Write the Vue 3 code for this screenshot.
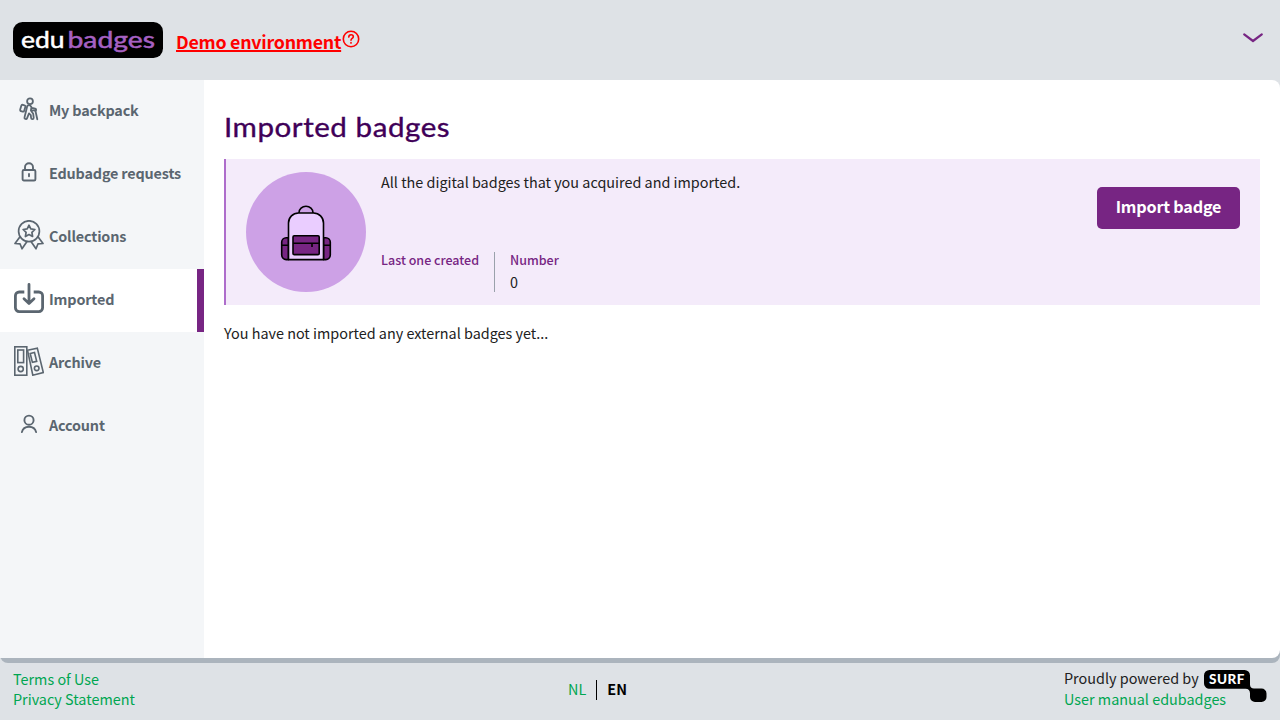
<script setup>
const items = [
  { id: 'backpack', label: 'My backpack' },
  { id: 'requests', label: 'Edubadge requests' },
  { id: 'collections', label: 'Collections' },
  { id: 'imported', label: 'Imported', active: true },
  { id: 'archive', label: 'Archive' },
  { id: 'account', label: 'Account' },
]
</script>

<template>
  <div class="page">
    <header class="header">
      <svg class="logo" width="150" height="36" viewBox="0 0 150 36">
        <rect width="150" height="36" rx="9.5" fill="#000" />
        <text class="logo-text" x="8" y="26" fill="#fff" stroke="#fff" textLength="43.500" lengthAdjust="spacingAndGlyphs">edu</text>
        <text class="logo-text" x="54.5" y="26" fill="#a661c2" stroke="#a661c2" textLength="87.500" lengthAdjust="spacingAndGlyphs">badges</text>
      </svg>
      <a class="demo">Demo environment</a>
      <svg class="help" width="18" height="18" viewBox="0 0 18 18" fill="none" stroke="#f00" stroke-width="1.6" stroke-linecap="round">
        <circle cx="9" cy="9" r="7.7" />
        <path d="M6.8 7.1c0-1.5 1-2.3 2.3-2.3s2.2.8 2.2 2c0 1.6-2.3 1.7-2.3 3.4" />
        <path d="M9 12.7v.2" stroke-width="1.7" />
      </svg>
      <svg class="chevron" width="22" height="12" viewBox="0 0 22 12" fill="none" stroke="#772583" stroke-width="2.2" stroke-linecap="round" stroke-linejoin="round">
        <path d="M2.2 2.4l8.8 6.6 8.8-6.6" />
      </svg>
    </header>

    <div class="body">
      <nav class="sidebar">
        <a v-for="item in items" :key="item.id" class="item" :class="{ active: item.active }">
          <span class="icon">
            <svg v-if="item.id === 'backpack'" class="low" width="20" height="24" viewBox="0 0 20 24" fill="none" stroke="#5b6670" stroke-width="1.8" stroke-linecap="round" stroke-linejoin="round">
              <circle cx="11" cy="4.2" r="2.9" />
              <path d="M3.9 7.8l1.7.5c.8.2 1 .8.8 1.5l-1.2 4c-.2.7-.8 1-1.5.8L2 14.1c-.7-.2-1-.8-.8-1.5l1.1-3.9c.2-.7.8-1.1 1.6-.9z" />
              <path d="M8.4 8.8c.9-1 2.700-.9 3.300.2l1.200 1.900 3.300.7c1.400.4 1.200 2.100-.2 2l-3.300-.5M8.200 9.200L7 14.200l-1.500 6.200c-.4 1.700 2 2.300 2.600.7l1.900-4.700 1.800 1.700.3 2.900c.2 1.700 2.600 1.600 2.600-.2l-.5-4.100-2.300-3.200.4-2.500" />
              <path d="M16.300 13.300l2 9" />
            </svg>
            <svg v-else-if="item.id === 'requests'" width="16" height="20" viewBox="0 0 16 20" fill="none" stroke="#5b6670" stroke-width="1.9" stroke-linecap="round">
              <rect x="1.6" y="8" width="12.8" height="10.500" rx="1.3" />
              <path d="M4 8V5.300a4 4 0 0 1 8 0V8" />
              <path d="M8 11.900v2.400" />
            </svg>
            <svg v-else-if="item.id === 'collections'" width="30" height="30" viewBox="0 0 30 30" fill="none" stroke="#5b6670" stroke-width="1.7" stroke-linejoin="round">
              <circle cx="15" cy="11.2" r="10.4" />
              <path d="M15 5.2l1.8 3.700 4.100.6-3 2.900.7 4.100-3.600-2-3.600 2 .7-4.100-3-2.900 4.100-.6z" />
              <path d="M6 16.800L1 23.500l5 .3 2 5 5-7.300M24 16.800l5 6.700-5 .3-2 5-5-7.300" />
            </svg>
            <svg v-else-if="item.id === 'imported'" width="30" height="30" viewBox="0 0 30 30" fill="none" stroke="#5b6670" stroke-width="2.8" stroke-linejoin="round">
              <path d="M10.300 9H5.200a3.800 3.800 0 0 0-3.800 3.800v12A3.800 3.800 0 0 0 5.200 28.600h19.600a3.800 3.800 0 0 0 3.800-3.800v-12A3.800 3.800 0 0 0 24.800 9h-5.100" />
              <path d="M15 1.400v18.300M10 15.800l5 4.700 5-4.700" stroke-linecap="round" />
            </svg>
            <svg v-else-if="item.id === 'archive'" width="30" height="30" viewBox="0 0 30 30" fill="none" stroke="#5b6670" stroke-width="1.6">
              <rect x=".8" y=".8" width="12" height="28.400" />
              <rect x="3.800" y="4" width="5.800" height="12.600" />
              <circle cx="6.700" cy="23" r="2.600" />
              <path d="M13.500 4.200l9.800-2.100 6 24.500-10.500 2.600z" />
              <path d="M16.200 7.500l4.300-1 2.200 8.800-4.300 1.100z" />
              <circle cx="22.700" cy="22.300" r="2.300" />
            </svg>
            <svg v-else width="18" height="20" viewBox="0 0 18 20" fill="none" stroke="#5b6670" stroke-width="1.9" stroke-linecap="round">
              <circle cx="9" cy="6.200" r="4.600" />
              <path d="M1.900 18.100c.8-3.500 3.500-5.400 7.100-5.400s6.300 1.900 7.100 5.400" />
            </svg>
          </span>
          <span class="label">{{ item.label }}</span>
        </a>
      </nav>

      <main class="content">
        <h1>Imported badges</h1>
        <section class="panel">
          <svg class="art" width="120" height="120" viewBox="0 0 120 120" stroke="#000" stroke-width="1.6" stroke-linejoin="round">
            <circle cx="60" cy="60" r="60" fill="#cda1e6" stroke="none" />
            <path d="M53 41v-.3a7 6.500 0 0 1 14 0v.3" fill="none" />
            <path d="M42.500 65.800h-2.300a4.500 4.500 0 0 0-4.500 4.500v12.800a4.500 4.500 0 0 0 4.500 4.500h2.300zM77.500 65.800h2.300a4.500 4.500 0 0 1 4.500 4.500v12.800a4.500 4.500 0 0 1-4.500 4.500h-2.300z" fill="#772583" />
            <path d="M42.500 87.600V51a10 10 0 0 1 10-10h15a10 10 0 0 1 10 10v36.600z" fill="#eacdff" />
            <rect x="47" y="63.800" width="26.200" height="18.800" rx="1.200" fill="#772583" />
            <path d="M47 71.300h26.200M66 71.300v3.800M35.700 73.200h6.800M77.500 73.200h6.800" fill="none" />
          </svg>
          <div class="info">
            <p class="desc">All the digital badges that you acquired and imported.</p>
            <div class="stats">
              <div class="stat first"><span class="caption">Last one created</span></div>
              <div class="stat"><span class="caption">Number</span><span class="value">0</span></div>
            </div>
          </div>
          <button class="button">Import badge</button>
        </section>
        <p class="empty">You have not imported any external badges yet...</p>
      </main>
    </div>

    <footer class="footer">
      <div class="links">
        <a class="terms">Terms of Use</a>
        <a class="privacy">Privacy Statement</a>
      </div>
      <div class="langs"><a class="nl">NL</a><span class="en">EN</span></div>
      <div class="powered">
        <span class="by">Proudly powered by</span>
        <a class="manual">User manual edubadges</a>
        <svg class="surf" width="64" height="34" viewBox="0 0 64 34">
          <path d="M5.500 0h35a5.500 5.500 0 0 1 5.500 5.500v9c0 2.500 1.500 4 4 4h7.500a5 5 0 0 1 5 5v3.500a5 5 0 0 1-5 5h-6.500a5 5 0 0 1-5-5v-3.500c0-3-1.500-4.700-4.500-4.700H6C2.500 18.800 0 16.500 0 13V5.500A5.500 5.500 0 0 1 5.500 0z" />
          <text class="surf-text" x="5" y="14" fill="#fff" textLength="35.500" lengthAdjust="spacing">SURF</text>
        </svg>
      </div>
    </footer>
  </div>
</template>

<style>
body { margin: 0; background: #dee2e6; }
</style>

<style scoped>
* { box-sizing: border-box; }
.page {
  height: 720px; display: flex; flex-direction: column; overflow: hidden;
  background: #dee2e6; color: #212121;
  font-family: "Noto Sans CJK SC", "Noto Sans", sans-serif; font-size: 14.4px; line-height: 20px;
}
.header { height: 80px; flex: none; display: flex; align-items: flex-start; padding: 22px 16px 0 13px; }
.logo-text { font-family: Lato, sans-serif; font-size: 23.5px; font-weight: 400; stroke-width: .5px; }
.demo { width: 165px; margin: 5px 0 0 13px; color: #f00; font-size: 17.8px; line-height: 28px; letter-spacing: -.25px; font-weight: 700; text-decoration: underline; text-decoration-thickness: 2px; white-space: nowrap; }
.help { margin: 8px 0 0 1px; }
.chevron { margin: 10px 0 0 auto; }
.body { height: 578px; flex: none; display: flex; background: #fff; border-radius: 0 8px 8px 8px; box-shadow: 0 5px 0 #abb4bd; }
.sidebar { width: 204px; background: #f4f6f8; }
.item { height: 63px; display: flex; align-items: center; padding: 0 0 3px 14px; color: #5b6670; font-weight: 700; letter-spacing: -.17px; }
.item.active { background: #fff; border-right: 7px solid #772583; }
.icon { width: 30px; margin: -3px 5px 0 0; display: flex; justify-content: center; }
.low { margin-top: 1px; }
.content { flex: 1; padding: 27px 20px 0; }
h1 { margin: 0; width: 225px; height: 52px; white-space: nowrap; font-family: Lato, sans-serif; font-size: 27.5px; line-height: 39px; font-weight: 400; letter-spacing: .5px; color: #3f0058; -webkit-text-stroke: .35px #3f0058; transform: scaleX(1.075); transform-origin: 0 0; }
.panel { height: 146px; display: flex; background: #f4ebfa; border-left: 2px solid #ae6dcb; padding: 13px 20px; }
.art { margin-right: 15px; flex: none; }
.info { display: flex; flex-direction: column; flex: 1; }
.desc { margin: 0; }
.stats { display: flex; margin-top: 60px; }
.stat { height: 40px; padding-left: 15px; display: flex; flex-direction: column; }
.stat.first { padding: 0 15px 0 0; border-right: 1px solid #9aa1ab; }
.caption { color: #772583; font-size: 12.5px; font-weight: 500; line-height: 18px; margin-top: -1px; }
.value { margin-top: 3px; line-height: 20px; }
.button { margin-top: 15px; width: 143px; height: 42px; padding: 0 0 4px; border: 0; border-radius: 5px; background: #772583; color: #fff; letter-spacing: -.2px; font: 700 16.2px/36px "Noto Sans CJK SC", sans-serif; }
.empty { margin: 18px 0 0; }
.footer { flex: 1; display: flex; justify-content: space-between; padding: 11px 14px 0 13px; }
.links, .powered { display: flex; flex-direction: column; align-items: flex-start; }
.links a, .manual, .nl { color: #00a651; }
.links { width: 118px; white-space: nowrap; }
.langs { display: flex; height: 20px; margin-top: 11px; line-height: 18px; }
.nl { padding-right: 10px; border-right: 1px solid #000; }
.en { padding-left: 10px; color: #000; font-weight: 700; }
.powered { width: 202px; position: relative; }
.by { margin-top: -1px; margin-bottom: 1px; }
.surf { position: absolute; left: 140px; top: 1px; }
.surf-text { font-family: Lato, sans-serif; font-size: 13.5px; font-weight: 900; }
</style>
